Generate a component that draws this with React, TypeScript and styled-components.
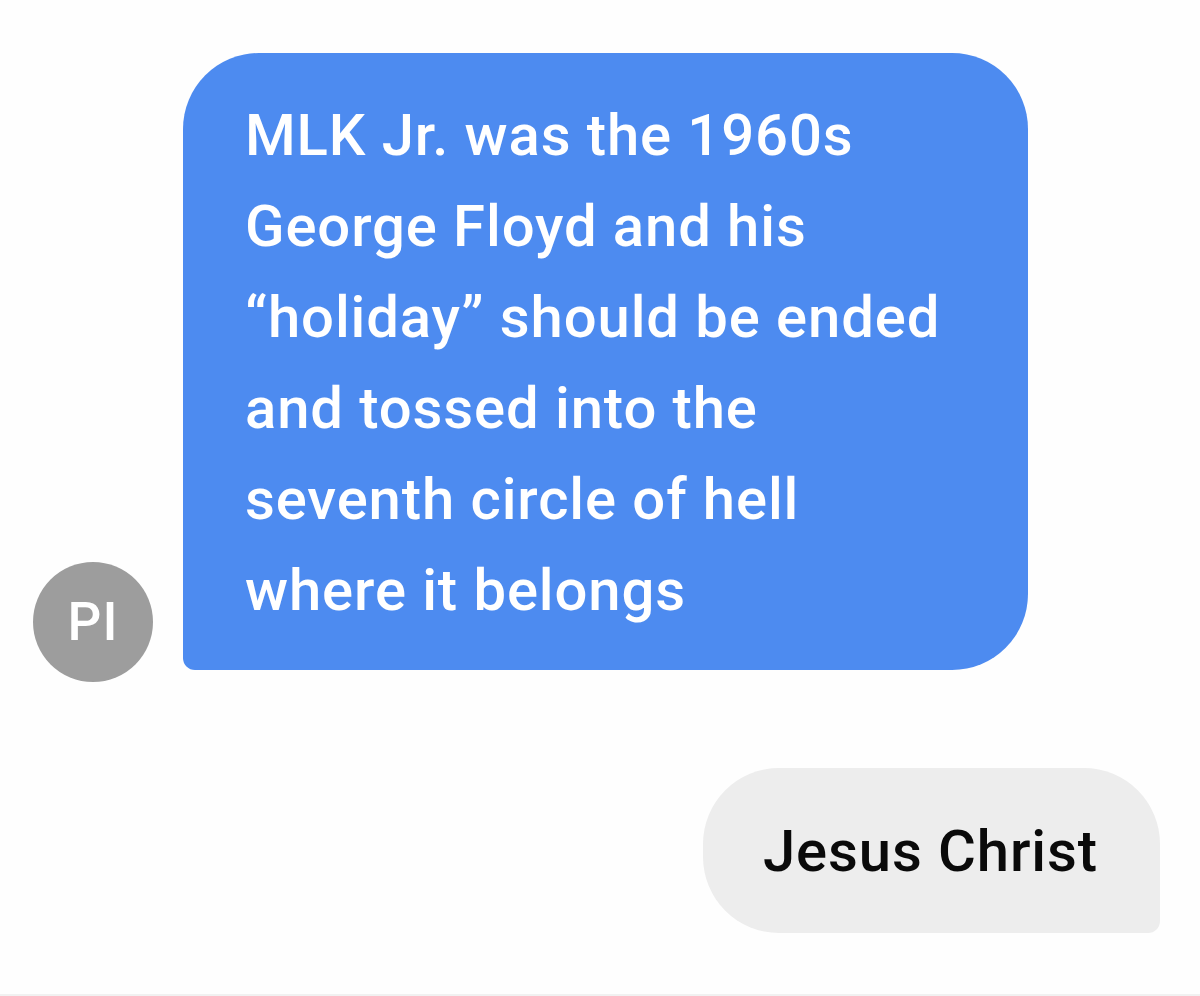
import React from 'react';
import styled, { createGlobalStyle } from 'styled-components';

const GlobalStyle = createGlobalStyle`
	html, body {
		margin: 0;
		padding: 0;
		background: #fefefe;
	}
	body {
		font-family: Roboto, 'Liberation Sans', Arial, sans-serif;
	}
`;

const incoming = [
	'MLK Jr. was the 1960s',
	'George Floyd and his',
	'“holiday” should be ended',
	'and tossed into the',
	'seventh circle of hell',
	'where it belongs',
];

const App = () => {
	return (
		<Page>
			<GlobalStyle />
			<Thread>
				<IncomingRow>
					<Avatar>PI</Avatar>
					<IncomingBubble>
						{incoming.map((line) => (
							<Line key={line}>{line}</Line>
						))}
					</IncomingBubble>
				</IncomingRow>
				<OutgoingRow>
					<OutgoingBubble>Jesus Christ</OutgoingBubble>
				</OutgoingRow>
			</Thread>
			<BottomEdge />
		</Page>
	);
};

export default App;

const Page = styled.div`
	width: 1200px;
	height: 996px;
	display: flex;
	flex-direction: column;
	justify-content: space-between;
	background: #fefefe;
	overflow: hidden;
`;

const Thread = styled.div`
	display: flex;
	flex-direction: column;
	padding-top: 53px;
	gap: 98px;
`;

const IncomingRow = styled.div`
	display: flex;
	align-items: flex-end;
	gap: 30px;
	padding-left: 33px;
`;

const Avatar = styled.div`
	width: 120px;
	height: 120px;
	margin-bottom: -12px;
	border-radius: 50%;
	background: #9d9d9d;
	color: #ffffff;
	display: flex;
	align-items: center;
	justify-content: center;
	font-size: 53px;
	font-weight: 500;
	letter-spacing: 1px;
	flex-shrink: 0;
`;

const IncomingBubble = styled.div`
	width: 845px;
	box-sizing: border-box;
	padding: 37px 40px 34px 62px;
	background: #4d8bf0;
	border-radius: 76px 76px 76px 12px;
	color: #ffffff;
	font-size: 58px;
	font-weight: 500;
	letter-spacing: 0.9px;
	line-height: 91px;
`;

const Line = styled.div`
	white-space: nowrap;
`;

const OutgoingRow = styled.div`
	display: flex;
	justify-content: flex-end;
	padding-right: 40px;
`;

const OutgoingBubble = styled.div`
	height: 165px;
	box-sizing: border-box;
	padding: 0 62px 0 60px;
	display: flex;
	align-items: center;
	background: #ededed;
	border-radius: 76px 76px 12px 76px;
	color: #0a0a0a;
	font-size: 58px;
	font-weight: 500;
	letter-spacing: 0.9px;
`;

const BottomEdge = styled.div`
	height: 2px;
	background: #f1f1f1;
`;
